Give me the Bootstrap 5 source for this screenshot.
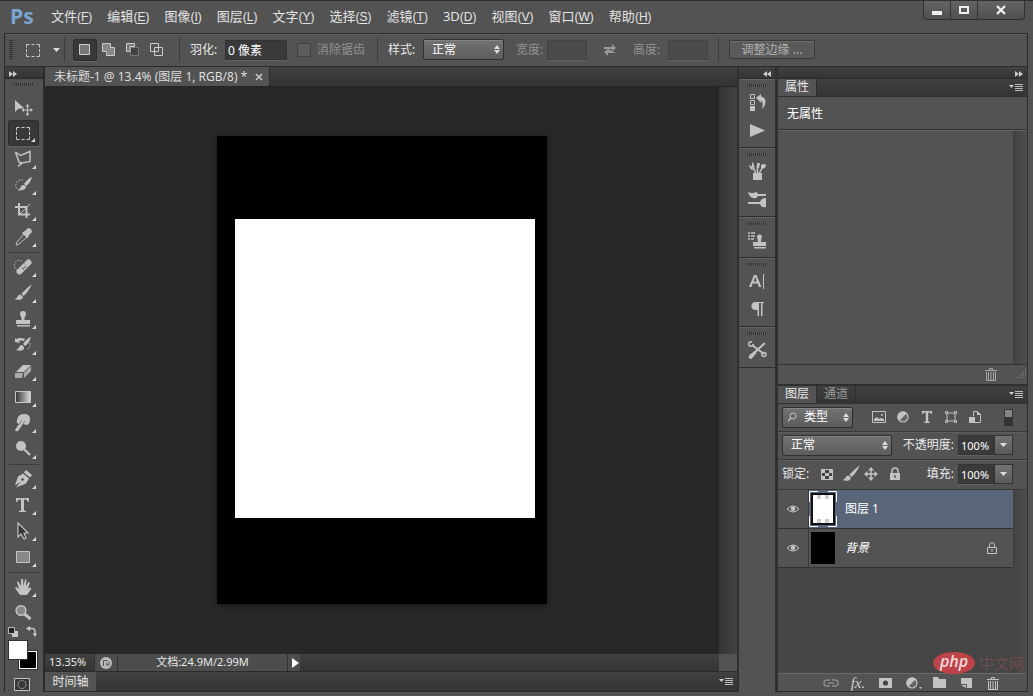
<!DOCTYPE html>
<html lang="zh-CN">
<head>
<meta charset="utf-8">
<meta name="viewport" content="width=device-width, initial-scale=1">
<title>未标题-1 @ 13.4%</title>
<link href="https://cdn.jsdelivr.net/npm/bootstrap@5.3.0/dist/css/bootstrap.min.css" rel="stylesheet">
<style>
:root{--face:#535353;--line:#2b2b2b;--ink:#c3c3c3}
body{font:12px/16px "Noto Sans","Noto Sans CJK SC",sans-serif;color:#e8e8e8;background:var(--face)}
button,input,select{font:inherit;color:inherit}
button{background:none;border:0;padding:0}
svg{display:block;flex:none}
.ico{width:20px;height:20px;fill:var(--ink);stroke:none}
.s{fill:none;stroke:var(--ink);stroke-width:1.5}
.thin{fill:none;stroke:var(--ink);stroke-width:1}
.app{height:100vh;padding:0 5px 4px 4px;border-top:1px solid #2a3138}
.menubar{height:32px}
.logo-ps{font:bold 21px/30px "Open Sans",sans-serif;color:#79a5cf;width:39px;padding-left:6px}
.menubar a{color:#e4e4e4;text-decoration:none;font-size:13px;line-height:30px;margin-right:15px;white-space:nowrap}
.menubar a u{font-family:"Liberation Sans",sans-serif;text-decoration:none;font-size:12px}
.menubar a u i{font-style:normal;text-decoration:underline;text-underline-offset:2px}
.winbtns{height:19px;border:1px solid #303030;border-top:0;border-radius:0 0 4px 4px;background:linear-gradient(#646464,#505050);margin-right:3px}
.winbtns button{width:27px;border-right:1px solid #303030}
.winbtns button:last-child{width:46px;border:0}
.optbar{height:34px;border:1px solid var(--line);box-shadow:inset 0 1px #606060}
.optbar label{width:35px}
.optbar label.wide{width:50px}
.rule-v{width:1px;height:24px;background:#3c3c3c;flex:none;margin:0 10px}
.grip-v{width:4px;height:20px;background:repeating-linear-gradient(#333 0 1px,transparent 1px 2px)}
.grip-h{width:20px;height:3px;background:repeating-linear-gradient(90deg,#333 0 1px,#5a5a5a 1px 2px)}
.mode{width:24px;height:22px}
.pressed{background:#383838;border:1px solid #2d2d2d;border-radius:2px;box-shadow:0 1px #666}
.field{height:20px;background:#3a3a3a;border:1px solid #333;box-shadow:0 1px #636363;padding:0 2px;color:#fff;min-width:0}
.field:disabled{background:#4b4b4b;border-color:#444}
.dim{color:#929292}
.pick{appearance:none;height:21px;border:1px solid #2f2f2f;border-radius:2px;color:#fff;padding:0 8px;box-shadow:inset 0 1px #858585;background:url("data:image/svg+xml,%3Csvg xmlns='http://www.w3.org/2000/svg' width='6' height='9'%3E%3Cpath d='M0 4L3 0 6 4zM0 5h6L3 9z' fill='%23ddd'/%3E%3C/svg%3E") no-repeat right 3px center,linear-gradient(#737373,#5c5c5c)}
.chk{appearance:none;width:14px;height:14px;margin:0 6px 0 10px;background:#5c5c5c;border:1px solid #424242;border-radius:2px}
.edge{width:86px;height:19px;border:1px solid #3b3b3b;box-shadow:inset 0 1px #6d6d6d;background:#5a5a5a;color:#b0b0b0}
.darkbar{background:linear-gradient(#414141,#343434)}
.head{height:12px;flex:none;border-bottom:1px solid var(--line)}
.toolcol{width:39px;border-left:1px solid var(--line);flex:none}
.tool{width:31px;height:26px;margin-left:3px;padding-right:2px;position:relative;display:flex;align-items:center;justify-content:center;flex:none}
.tool.more::after{content:"";position:absolute;right:3px;bottom:3px;border:2px solid transparent;border-right-color:#ddd;border-bottom-color:#ddd}
.rule-h{height:1px;background:#3a3a3a;margin:2px 4px 1px;border:0;opacity:1;flex:none}
.minis{height:14px;padding-left:3px}
.swatches{height:29px;position:relative;margin:3px 0 8px 4px;flex:none}
.swatches button{position:absolute;width:18px;height:18px;border:1px solid #fff;outline:1px solid #333}
.bgc{left:10px;top:10px;background:#000}
.fgc{left:0;top:0;background:#fff}
.work{border-left:2px solid var(--line);min-width:0}
.doctabs{height:20px;border-bottom:1px solid #252525}
.doctab{background:#535353;color:#dedede;padding:1px 6px 0 9px;border-right:1px solid #2d2d2d;white-space:nowrap}
.stage{background:#282828;min-width:0}
.paper{width:330px;height:468px;background:#000;box-shadow:0 1px 5px #151515;padding:83px 12px 86px 18px}
.art{height:100%;background:#fff}
.scrl{width:18px;background:linear-gradient(90deg,#343434,#424242);flex:none}
.status{height:17px;font-size:11px;line-height:15px}
.status .cell{background:#4d4d4d;border-left:1px solid #333}
.timeline{height:21px;border-top:1px solid var(--line);border-bottom:1px solid var(--line)}
.dock{width:40px;flex:none;border:solid #303030;border-width:0 2px}
.dockgrp{border-bottom:1px solid #2e2e2e;box-shadow:inset 0 1px #646464;padding:5px 0 3px}
.dockgrp button{width:36px;height:28px;display:flex;align-items:center;justify-content:center}
.dockgrp .grip-h{margin:0 auto 1px}
.panels{width:251px;flex:none;border-left:1px solid #303030;border-right:1px solid #303030}
.ptabs{height:18px;border-bottom:1px solid #333;flex:none}
.ptabs button{padding:0 7px;background:#535353;border-right:1px solid #2d2d2d}
.ptabs button.off{background:none;color:#9a9a9a}
.propmsg{height:33px;border-bottom:1px solid #333;padding:9px 9px;color:#fff}
.propbody{height:235px;border-top:1px solid #646464;border-bottom:1px solid #333;flex:none}
.propfoot{height:21px;border-bottom:2px solid #2f2f2f;flex:none}
.sidetrack{width:14px;background:linear-gradient(90deg,#434343,#4e4e4e);border-left:1px solid #404040}
.prow{height:28px;border-bottom:1px solid #393939;flex:none;padding:0 14px 0 4px;box-shadow:0 1px #5e5e5e}
.prow.tall{height:30px}
.pct{width:36px;height:20px;font-size:11px}
.drop{width:19px;height:20px;border:1px solid #333;background:linear-gradient(#737373,#5a5a5a);display:flex;align-items:center;justify-content:center}
.layers{background:#454545;min-height:0}
.layerrow{height:39px;background:#535353;border-bottom:1px solid #333;color:#fff}
.layerrow .eye{width:31px;height:38px;border-right:1px solid #393939;flex:none}
.layerrow.on .lname{background:#596679}
.lfoot{height:19px;border-top:1px solid #6a6a6a;border-bottom:1px solid var(--line);flex:none;padding-right:24px;gap:7px}
.fxbtn{font:italic 15px/18px "Liberation Serif",serif;width:20px;color:#d0d0d0}
.brandmark{position:absolute;right:9px;bottom:22px;color:#6d4d4d;font-size:15px;line-height:22px}
.brandmark span{background:#bd4348;color:#f0dada;border-radius:50%;width:42px;height:22px;font:italic 600 16px/19px "Open Sans",sans-serif;text-align:center;margin-right:4px}
</style>
<script src="https://cdn.jsdelivr.net/npm/bootstrap@5.3.0/dist/js/bootstrap.bundle.min.js"></script>
</head>
<body>
<svg width="0" height="0" class="position-absolute">
<defs>
<linearGradient id="gr"><stop stop-color="#333"/><stop offset="1" stop-color="#ddd"/></linearGradient>
<symbol id="caret" viewBox="0 0 7 4"><path d="M0 0h7L3.500 4z" fill="#ddd"/></symbol>
<symbol id="pmenu" viewBox="0 0 14 9"><path d="M0 2h5L2.500 5z" fill="#ccc"/><path d="M6 1.500h8M6 3.500h8M6 5.500h8M6 7.500h8" stroke="#bbb"/></symbol>
<symbol id="ff" viewBox="0 0 8 6"><path d="M0 0l4 3-4 3zM4 0l4 3-4 3z" fill="#ccc"/></symbol>
<symbol id="rw" viewBox="0 0 8 6"><path d="M4 0L0 3l4 3zM8 0L4 3l4 3z" fill="#ccc"/></symbol>
<symbol id="marq" viewBox="0 0 20 20"><path d="M3.500 7.500v-3h3M8.500 4.500h3M13.500 4.500h3v3M16.500 9v3M16.500 13.500v3h-3M11.500 16.500h-3M6.500 16.500h-3v-3M3.500 12V9" fill="none" stroke="#c8c8c8"/></symbol>
<symbol id="brush" viewBox="0 0 20 20"><path d="M18.500 1.500C15 4 10 9 8.500 11l2 2C13 11 17 6 18.500 1.500zM7.500 11.500c-3 0-2.500 3.500-6 4.500 3 1.500 8 1 8.500-2z"/></symbol>
<symbol id="half" viewBox="0 0 20 20"><circle cx="10" cy="10" r="5" fill="#666" stroke="#c3c3c3" stroke-width="1.200"/><path d="M6 14A5.500 5.500 0 0 1 14 6z"/></symbol>
<symbol id="move4" viewBox="0 0 20 20"><path d="M4 10h12M10 4v12" class="s"/><path d="M10 3l3 3.500H7zM10 17l3-3.500H7zM3 10l3.500-3v6zM17 10l-3.500-3v6z"/></symbol>
<symbol id="trash" viewBox="0 0 20 20"><path d="M4 6.500h12M8.500 6V4.500h3V6M5.500 8v8.500h9V8M7.500 8v8M10 8v8M12.500 8v8" class="thin"/></symbol>
<symbol id="eyeball" viewBox="0 0 20 20"><path d="M4 10q6-6 12 0q-6 6-12 0z" class="thin"/><circle cx="10" cy="9.800" r="2.300"/></symbol>
<symbol id="stamp" viewBox="0 0 20 20"><path d="M8.500 11c.5-3-1.500-4-1.500-6a3 3 0 0 1 6 0c0 2-2 3-1.500 6H17v4H3v-4zM4 16h13v1.500H4z"/></symbol>
</defs>
</svg>

<div class="app d-flex flex-column overflow-hidden position-relative">
<header class="menubar d-flex align-items-start">
  <div class="logo-ps">Ps</div>
  <nav class="d-flex flex-grow-1 ps-2" aria-label="菜单">
    <a href="#">文件<u>(<i>F</i>)</u></a><a href="#">编辑<u>(<i>E</i>)</u></a><a href="#">图像<u>(<i>I</i>)</u></a><a href="#">图层<u>(<i>L</i>)</u></a><a href="#">文字<u>(<i>Y</i>)</u></a><a href="#">选择<u>(<i>S</i>)</u></a><a href="#">滤镜<u>(<i>T</i>)</u></a><a href="#">3D<u>(<i>D</i>)</u></a><a href="#">视图<u>(<i>V</i>)</u></a><a href="#">窗口<u>(<i>W</i>)</u></a><a href="#">帮助<u>(<i>H</i>)</u></a>
  </nav>
  <div class="winbtns d-flex">
    <button aria-label="最小化" class="d-flex justify-content-center align-items-center"><svg width="12" height="12"><path d="M1 7h10v4H1z" fill="#eee"/></svg></button>
    <button aria-label="最大化" class="d-flex justify-content-center align-items-center"><svg width="12" height="12"><path d="M2 3h8v6H2z" fill="none" stroke="#eee" stroke-width="2"/></svg></button>
    <button aria-label="关闭" class="d-flex justify-content-center align-items-center"><svg width="12" height="12"><path d="M2 2l8 8M10 2l-8 8" stroke="#eee" stroke-width="2.400"/></svg></button>
  </div>
</header>

<section class="optbar d-flex align-items-center text-nowrap" aria-label="选项">
  <div class="grip-v ms-1"></div>
  <svg class="ico ms-2 me-2"><use href="#marq" x="2"/></svg>
  <svg class="ms-1" width="7" height="4"><use href="#caret"/></svg>
  <div class="rule-v ms-1 me-2"></div>
  <button class="mode pressed d-flex justify-content-center" aria-label="新选区"><svg width="20" height="20"><path d="M4.500 4.500h10v10h-10z" fill="#777" stroke="#ccc"/></svg></button>
  <button class="mode d-flex justify-content-center" aria-label="添加到选区"><svg width="20" height="20"><path d="M3.500 4.500h8v4h4v8h-8v-4h-4z" fill="#888" stroke="#ccc"/></svg></button>
  <button class="mode d-flex justify-content-center" aria-label="从选区减去"><svg width="20" height="20"><path d="M7.500 8.500h8v8h-8z" fill="#444" stroke="#777"/><path d="M3.500 4.500h8v3h-4.500v5H3.500z" fill="#777" stroke="#ccc"/></svg></button>
  <button class="mode d-flex justify-content-center" aria-label="与选区交叉"><svg width="20" height="20"><path d="M3.500 4.500h8v8h-8zM7.500 8.500h8v8h-8z" fill="none" stroke="#ccc"/></svg></button>
  <div class="rule-v"></div>
  <label for="feather">羽化:</label><input id="feather" class="field" value="0 像素" style="width:62px">
  <input type="checkbox" class="chk" id="aa" disabled><label for="aa" class="dim wide">消除锯齿</label>
  <div class="rule-v"></div>
  <label for="sty">样式:</label><select id="sty" class="pick" style="width:81px"><option>正常</option></select>
  <label for="wd" class="dim ms-2 ps-1">宽度:</label><input id="wd" class="field" disabled style="width:40px">
  <button aria-label="互换" class="mx-3"><svg width="14" height="14"><path d="M1 4h8V1l4 4-4 3V6H1zM13 10H5v3L1 9l4-3" fill="#999"/></svg></button>
  <label for="ht" class="dim">高度:</label><input id="ht" class="field" disabled style="width:40px">
  <div class="rule-v"></div>
  <button class="edge">调整边缘 ...</button>
</section>

<main class="d-flex flex-grow-1" style="min-height:0">
  <aside class="toolcol d-flex flex-column" aria-label="工具">
    <div class="head darkbar ps-1 pt-1"><svg width="8" height="6"><use href="#ff"/></svg></div>
    <div class="grip-h mx-auto mt-1 mb-2"></div>
    <button class="tool" aria-label="移动"><svg class="ico"><path d="M2 3v12l3-3 6-1z"/><path d="M10 13h9M14.500 8.500v9" class="thin"/><path d="M14.500 7l2 2.500h-4zM14.500 19l2-2.500h-4zM8.500 13l2.500-2v4zM20 13l-2.500-2v4z"/></svg></button>
    <button class="tool more pressed" aria-label="选框"><svg class="ico"><use href="#marq"/></svg></button>
    <button class="tool more" aria-label="套索"><svg class="ico"><path d="M2.500 3l5 3.500L17 2.500v10l-8 1.500-3-1-3.500-10M6 13l2 2-3 2.500" class="s"/></svg></button>
    <button class="tool more" aria-label="快速选择"><svg class="ico"><path d="M10 5a5 5 0 1 0-3 11" class="thin" stroke-dasharray="1.500 1.500"/><path d="M19 2c-3 1-6 4-8 7l2 2c3-2 5-5 6-9zM10 10c-2 0-2 3-5 5 4 1 8 0 8-4z"/></svg></button>
    <button class="tool more" aria-label="裁剪"><svg class="ico"><path d="M6 2v11.500h11M2 6h11.500v11" fill="none" stroke="#c3c3c3" stroke-width="2"/><path d="M7 13l10-10" class="thin"/></svg></button>
    <button class="tool more" aria-label="吸管"><svg class="ico"><path d="M11 7l3 3-8 7-3 1 1-3z" class="thin"/><path d="M10 5l2-1 3-3 3 1 1 3-3 3-1 3-2-1-4-4z"/></svg></button>
    <hr class="rule-h">
    <button class="tool more" aria-label="修复画笔"><svg class="ico"><path d="M9 4a5 5 0 1 0-5 9" class="thin" stroke-dasharray="1.500 1.500"/><path d="M6.500 14.500l9-9" stroke="#c3c3c3" stroke-width="6" stroke-linecap="round"/><path d="M8 10l4 4M11 6l4 4" stroke="#777" stroke-width=".8" stroke-dasharray="1 1"/><path d="M10 12l3-3" stroke="#555" stroke-width="2" stroke-dasharray="1 1"/></svg></button>
    <button class="tool more" aria-label="画笔"><svg class="ico"><use href="#brush"/></svg></button>
    <button class="tool more" aria-label="图章"><svg class="ico"><use href="#stamp"/></svg></button>
    <button class="tool more" aria-label="历史画笔"><svg class="ico"><path d="M3 4q5-2 9 0l-1 2q-3-1-5 0l1 2-5-1V3z"/><path d="M18 2c-3 1-6 4-8 7l2 2c3-2 5-5 6-9zM9 10c-3 0-2 3-6 5 4 2 9 0 8-3z"/><path d="M17 8q1 5-4 7" class="thin" stroke-dasharray="1.500 1.500"/></svg></button>
    <button class="tool more" aria-label="橡皮擦"><svg class="ico"><path d="M3 11l7-7h8l-7 7z"/><path d="M2 12h8l-1 5H2zM11 12l7-7v5l-7 7z" fill="#aaa"/></svg></button>
    <button class="tool more" aria-label="渐变"><svg class="ico"><path d="M2.500 4.500h15v11h-15z" fill="url(#gr)" stroke="#c8c8c8"/></svg></button>
    <button class="tool more" aria-label="涂抹"><svg class="ico"><path d="M5 4q2-3 6-3 6 0 6 5 0 5-3 6l-4-1-5 7q-2 1-3-1l4-6q-3-1-2-4z"/><path d="M9 7l-3 5M12 8l-3 4" stroke="#666" stroke-width=".7"/></svg></button>
    <button class="tool more" aria-label="减淡"><svg class="ico"><circle cx="8" cy="7" r="5"/><path d="M11 10l6 6" stroke="#c3c3c3" stroke-width="2.200"/></svg></button>
    <hr class="rule-h">
    <button class="tool more" aria-label="钢笔"><svg class="ico"><path d="M13 1l6 5-2 2.500-6-5zM10 4.500l6 5-3 5-10 4 5-6-6 4 3-9z"/><circle cx="9.500" cy="10.500" r="1.200" fill="#444"/></svg></button>
    <button class="tool more" aria-label="文字"><svg class="ico"><path d="M3 3h13v4h-1q-.5-2.500-3-2.500h-1V15q0 1 2 1v1H6v-1q2 0 2-1V4.500H7Q4.500 4.500 4 7H3z"/></svg></button>
    <button class="tool more" aria-label="路径选择"><svg class="ico"><path d="M5 2v14l3-3 3 5 2-1-2-5h4z" fill="#333" stroke="#c3c3c3" stroke-width="1.200"/></svg></button>
    <button class="tool more" aria-label="矩形"><svg class="ico"><path d="M3.500 4.500h13v11h-13z" fill="#888" stroke="#c3c3c3"/></svg></button>
    <hr class="rule-h">
    <button class="tool more" aria-label="抓手"><svg class="ico"><path d="M7 18l-5-7 1.500-1L6 12 4 5l1.500-.5L8 9V2h2l.5 7L12 2.500h1.500L13 9l2.500-4 1.500.5-2 6 2-1 1.500 1-4.500 6.500z"/></svg></button>
    <button class="tool" aria-label="缩放"><svg class="ico"><circle cx="8" cy="7.500" r="4.800" fill="#888" stroke="#c3c3c3" stroke-width="1.600"/><path d="M11.500 11l6 5" stroke="#c3c3c3" stroke-width="3"/></svg></button>
    <div class="minis d-flex align-items-center gap-2">
      <button aria-label="默认颜色"><svg width="10" height="10"><path d="M4 4h6v6H4z" fill="#c8c8c8"/><path d="M.5.5h6v6h-6z" fill="#222" stroke="#bbb"/></svg></button>
      <button aria-label="切换颜色"><svg width="11" height="11"><path d="M3 2.500h3q3 0 3 3V8" class="s"/><path d="M0 2.500L4 0v5zM9 11L6.500 7.500h4.500z" fill="#ccc"/></svg></button>
    </div>
    <div class="swatches"><button class="bgc" aria-label="背景色"></button><button class="fgc" aria-label="前景色"></button></div>
    <button aria-label="快速蒙版" class="ms-2"><svg width="18" height="14"><path d="M1.500.5h15v12h-15z" fill="#383838" stroke="#c3c3c3"/><circle cx="9" cy="6.500" r="4" fill="none" stroke="#eee" stroke-dasharray="1 1.200"/></svg></button>
  </aside>

  <section class="work d-flex flex-column flex-grow-1">
    <div class="doctabs darkbar d-flex">
      <div class="doctab d-flex align-items-center"><span>未标题-1 @ 13.4% (图层 1, RGB/8) *</span><button aria-label="关闭文档" class="ms-2"><svg width="8" height="8"><path d="M1 1l6 6M7 1L1 7" stroke="#ccc" stroke-width="1.500"/></svg></button></div>
    </div>
    <div class="d-flex flex-grow-1" style="min-height:0">
      <div class="stage d-flex flex-grow-1 align-items-center justify-content-center"><div class="paper"><div class="art"></div></div></div>
      <div class="scrl"></div>
    </div>
    <div class="status d-flex darkbar">
      <div class="d-flex flex-grow-1">
        <span class="ps-1" style="width:49px">13.35%</span>
        <span class="cell d-flex align-items-center justify-content-center" style="width:23px"><svg width="12" height="12"><circle cx="6" cy="6" r="6" fill="#bbb"/><path d="M3.500 9V3.500H7l2 2V8H6.500V6" fill="none" stroke="#555"/></svg></span>
        <span class="cell text-center" style="width:170px">文档:24.9M/2.99M</span>
        <button aria-label="更多信息" class="cell d-flex align-items-center ps-1" style="width:13px"><svg width="7" height="10"><path d="M0 0l7 5-7 5z" fill="#fff"/></svg></button>
      </div>
      <div style="width:18px;background:#535353"></div>
    </div>
    <div class="timeline darkbar d-flex align-items-center justify-content-between">
      <button class="h-100" style="width:51px;background:#535353">时间轴</button>
      <button aria-label="面板菜单" class="me-1"><svg width="14" height="9"><use href="#pmenu"/></svg></button>
    </div>
  </section>

  <aside class="dock" aria-label="面板停靠栏">
    <div class="head darkbar d-flex justify-content-end pe-1 pt-1"><svg width="8" height="6"><use href="#rw"/></svg></div>
    <div class="dockgrp"><div class="grip-h"></div>
      <button aria-label="历史记录"><svg class="ico"><path d="M3.500 2.500h4v4h-4zM3.500 8.500h4v4h-4z" fill="none" stroke="#c3c3c3"/><path d="M3 14h5v5H3zM9 6l5-4v2.500q4.500 1 4.500 5.500t-4 7q2.500-5 0-9v3z"/></svg></button>
      <button aria-label="动作"><svg class="ico"><path d="M3 4l15 6.500L3 17z"/></svg></button></div>
    <div class="dockgrp"><div class="grip-h"></div>
      <button aria-label="画笔预设"><svg class="ico"><path d="M6 12h9v7H6z"/><path d="M8.500 12L6 5M10.500 12V4M12.500 12l3-6" class="s"/><path d="M5 1q3 2 2 6L5 6zM10 2h3l-1 5h-2zM14 4q3-2 5 0l-1 3-4 1zM2 4q4 1 4 5-3 0-4-5z"/></svg></button>
      <button aria-label="画笔"><svg class="ico"><path d="M1 3q4 2 8 0 2 1 2 2h8v2h-8q-1 3-5 2-4-1-5-6zM19 9v9q-5 1-6-3H1v-2h12q1-4 6-4z"/></svg></button></div>
    <div class="dockgrp"><div class="grip-h"></div>
      <button aria-label="仿制源"><svg class="ico"><path d="M1 3h2M4 3h4M1 6h2M4 6h4M1 9h2M4 9h3" class="s"/><path d="M11 12q0-3-1-5a2.500 2.500 0 0 1 5 0q-1 2-1 5h5v4H6v-4zM7 17h12v1.500H7z"/></svg></button></div>
    <div class="dockgrp"><div class="grip-h"></div>
      <button aria-label="字符"><svg class="ico"><path d="M2 16L7 4h2.500l5 12H12l-1.500-3.500h-5L4.500 16zM6.500 10.500h3.500L8.200 6z"/><path d="M16.500 3v15" class="thin"/></svg></button>
      <button aria-label="段落"><svg class="ico"><path d="M9 3h8v1h-1.500v13H14V4h-2v13h-1.500v-6H8a4 4 0 0 1 1-8z"/></svg></button></div>
    <div class="dockgrp"><div class="grip-h"></div>
      <button aria-label="工具预设"><svg class="ico"><path d="M5 5l12 9M18 3L8 12" stroke="#c3c3c3" stroke-width="2"/><path d="M7.500 11l2 2-5 6-3-1 1-3z"/><circle cx="4" cy="4" r="2.300" class="s" stroke-dasharray="11 3"/><circle cx="17" cy="14.500" r="2" class="s"/></svg></button></div>
  </aside>

  <aside class="panels d-flex flex-column" aria-label="面板">
    <div class="head darkbar d-flex justify-content-end pe-1 pt-1"><svg width="8" height="6"><use href="#ff"/></svg></div>
    <div class="ptabs darkbar d-flex align-items-stretch"><button>属性</button><span class="ms-auto me-1 mt-1"><svg width="14" height="9"><use href="#pmenu"/></svg></span></div>
    <div class="propmsg">无属性</div>
    <div class="propbody d-flex justify-content-end"><div class="sidetrack"></div></div>
    <div class="propfoot d-flex justify-content-end align-items-center">
      <button aria-label="删除" class="me-3 opacity-75" disabled><svg class="ico"><use href="#trash"/></svg></button><svg width="10" height="10"><path d="M8.500 0v10M6.500 2v8M4.500 4v6M2.500 6v4M.5 8v2" stroke="#777" stroke-dasharray="1 1"/></svg></div>
    <div class="ptabs darkbar d-flex align-items-stretch"><button>图层</button><button class="off">通道</button><span class="ms-auto me-1 mt-1"><svg width="14" height="9"><use href="#pmenu"/></svg></span></div>

    <div class="prow d-flex align-items-center">
      <span class="position-relative"><select class="pick" aria-label="筛选类型" style="width:71px;padding-left:21px"><option>类型</option></select><svg class="position-absolute start-0 top-0 mt-1 ms-1" width="12" height="12"><circle cx="7" cy="5" r="3" class="thin"/><path d="M5 7l-3 3" class="s"/></svg></span>
      <div class="d-flex ms-3 flex-grow-1 gap-1">
        <button aria-label="像素图层"><svg class="ico"><path d="M3.500 4.500h13v11h-13z" fill="none" stroke="#c3c3c3"/><path d="M5 14v-2l3-2 2 2 2-1 3 1v2z"/><circle cx="13" cy="8" r="1"/></svg></button>
        <button aria-label="调整图层"><svg class="ico"><use href="#half"/></svg></button>
        <button aria-label="文字图层"><svg class="ico"><path d="M5 4h10v3h-1q0-1.500-1.500-1.500h-1.300V14q0 .8 1.500.8V16H7.300v-1.200q1.500 0 1.500-.8V5.500H7.500Q6 5.500 6 7H5z"/></svg></button>
        <button aria-label="形状图层"><svg class="ico"><path d="M6 6h8v8H6z" class="thin"/><path d="M4.500 4.500h2v2h-2zM13.500 4.500h2v2h-2zM4.500 13.500h2v2h-2zM13.500 13.500h2v2h-2z" fill="#535353" stroke="#c3c3c3"/></svg></button>
        <button aria-label="智能对象"><svg class="ico"><path d="M8.500 9V4.500h4l3 3v8H10" fill="none" stroke="#c3c3c3"/><path d="M4 10h6v6H4zM12 4v4h4z"/></svg></button>
        <button aria-label="筛选开关" class="ms-auto"><svg width="9" height="17"><path d="M.5.5h8v16h-8z" fill="#333" stroke="#333"/><path d="M1 1h7v7H1z" fill="#858585"/></svg></button>
      </div>
    </div>
    <div class="prow d-flex align-items-center">
      <select class="pick" aria-label="混合模式" style="width:110px"><option>正常</option></select>
      <label for="opa" class="ms-auto">不透明度:</label><input id="opa" class="field pct ms-1" value="100%"><button class="drop" aria-label="不透明度滑块"><svg width="7" height="4"><use href="#caret"/></svg></button>
    </div>
    <div class="prow tall d-flex align-items-center">
      <span>锁定:</span>
      <button aria-label="锁定透明像素" class="ms-2"><svg class="ico"><path d="M4.500 5.500h11v10h-11z" fill="#444" stroke="#c3c3c3"/><path d="M5 6h3v3H5zM12 6h3v3h-3zM8 9h4v3H8zM5 12h3v3H5zM12 12h3v3h-3z"/></svg></button>
      <button aria-label="锁定图像像素" class="ms-1"><svg class="ico"><use href="#brush"/></svg></button>
      <button aria-label="锁定位置"><svg class="ico"><use href="#move4"/></svg></button>
      <button aria-label="锁定全部" class="ms-1"><svg class="ico"><path d="M5 9h10v7H5z"/><path d="M7 9V7q0-3 3-3t3 3v2" class="s"/><path d="M9.500 11h1v3h-1z" fill="#333"/></svg></button>
      <label for="fil" class="ms-auto">填充:</label><input id="fil" class="field pct ms-1" value="100%"><button class="drop" aria-label="填充滑块"><svg width="7" height="4"><use href="#caret"/></svg></button>
    </div>
    <div class="layers d-flex flex-grow-1">
      <ul class="flex-grow-1 list-unstyled mb-0">
        <li class="layerrow on d-flex"><button class="eye d-flex align-items-center justify-content-center" aria-label="可见性"><svg class="ico"><use href="#eyeball"/></svg></button><div class="lname d-flex align-items-center flex-grow-1"><svg width="28" height="36"><path d="M2 2h24v32H2z" fill="#111"/><path d="M4 4h20v28H4z" fill="#fff"/><path d="M8 4h4v4H8zM16 4h4v4h-4zM4 8h0M8 28h4v4H8zM16 28h4v4h-4z" fill="#ccc"/><path d="M.5 11V.5H9M19 .5h8.500V11M27.500 25v10.500H19M9 35.500H.5V25" fill="none" stroke="#fff"/></svg><span class="ms-2">图层 1</span></div></li>
        <li class="layerrow d-flex"><button class="eye d-flex align-items-center justify-content-center" aria-label="可见性"><svg class="ico"><use href="#eyeball"/></svg></button><div class="lname d-flex align-items-center flex-grow-1"><svg width="28" height="36"><path d="M2 2h24v32H2z"/></svg><em class="ms-2">背景</em><svg class="ico ms-auto me-2"><g transform="translate(-3 0)"><path d="M5.500 9.500h9v6h-9z" class="thin"/><path d="M7.500 9V7q0-2.500 2.500-2.500T12.500 7v2" class="thin"/><path d="M9.500 11h1v3h-1z"/></g></svg></div></li>
      </ul>
      <div class="sidetrack"></div>
    </div>
    <div class="lfoot d-flex align-items-center justify-content-end">
      <button aria-label="链接图层" class="opacity-50"><svg class="ico"><path d="M9 7H6a3 3 0 0 0 0 6h3M11 7h3a3 3 0 0 1 0 6h-3M7 10h6" class="s"/></svg></button>
      <button aria-label="图层样式" class="fxbtn">fx.</button>
      <button aria-label="添加蒙版"><svg class="ico"><path d="M4 5h13v10H4z"/><circle cx="10.500" cy="10" r="2.600" fill="#444"/></svg></button>
      <button aria-label="新建调整图层"><svg class="ico"><use href="#half"/><path d="M17 14h3l-1.500 2z"/></svg></button>
      <button aria-label="新建组"><svg class="ico"><path d="M4 4h5l1 2h7v9H4z"/></svg></button>
      <button aria-label="新建图层"><svg class="ico"><path d="M5 5h11v10h-5v-4H5zM5 12h5v3z"/></svg></button>
      <button aria-label="删除图层"><svg class="ico"><use href="#trash"/></svg></button>
    </div>
  </aside>
</main>
<div class="brandmark d-flex"><span>php</span>中文网</div>
</div>
</body>
</html>
